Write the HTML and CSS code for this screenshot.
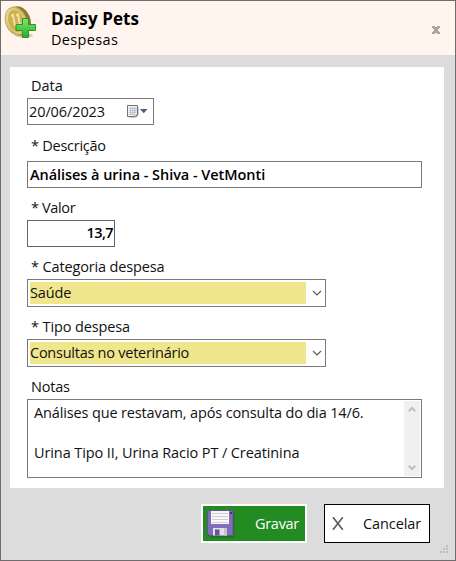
FILE: index.html
```html
<!DOCTYPE html>
<html lang="pt">
<head>
<meta charset="utf-8">
<title>Daisy Pets</title>
<link rel="stylesheet" href="styles.css">
</head>
<body>
<div class="window">
  <header class="header">
    <svg class="logo" width="34" height="34" viewBox="0 0 34 34">
      <defs>
        <linearGradient id="gold" x1="0" y1="0" x2="1" y2="1"><stop offset="0" stop-color="#f6ebae"/><stop offset=".5" stop-color="#cdb050"/><stop offset="1" stop-color="#eedb8d"/></linearGradient>
        <linearGradient id="plus" x1="0" y1="0" x2="0" y2="1"><stop offset="0" stop-color="#7bea68"/><stop offset="1" stop-color="#2da92b"/></linearGradient>
      </defs>
      <ellipse cx="22" cy="30.500" rx="9" ry="2" fill="#b9aa9a" opacity=".6"/>
      <ellipse cx="17.500" cy="16" rx="11" ry="15" transform="rotate(-18 17.500 16)" fill="#8b7636"/>
      <ellipse cx="14" cy="16" rx="10.500" ry="14.500" transform="rotate(-18 14 16)" fill="url(#gold)" stroke="#b49a4b" stroke-width=".7"/>
      <ellipse cx="14" cy="16" rx="8" ry="12" transform="rotate(-18 14 16)" fill="#cbb152" stroke="#ebdc97" stroke-width=".7"/>
      <path d="M9 11l2-1 2 11M14 10.500l2-1 2 11" fill="none" stroke="#f3e39a" stroke-width="2"/>
      <path d="M20.500 13.500h6v6h7v6h-7v7h-6v-7h-6.500v-6h6.500z" fill="url(#plus)" stroke="#2c9829"/>
    </svg>
    <div class="titles">
      <h1 class="title">Daisy Pets</h1>
      <p class="subtitle">Despesas</p>
    </div>
    <svg class="close" width="8" height="8" viewBox="0 0 8 8" shape-rendering="crispEdges"><path d="M0 0h3v1h2v-1h3v2h-1v1h-1v2h1v1h1v2h-3v-1h-2v1h-3v-2h1v-1h1v-2h-1v-1h-1z" fill="#a6a6a3"/></svg>
  </header>
  <main class="panel">
    <label class="label t-data">Data</label>
    <div class="box date"><span class="t-date">20/06/2023</span>
      <svg class="calendar" width="22" height="14" viewBox="0 0 22 14"><path d="M2 2h10v8l-3 3H2z" fill="#d2cece"/><path d="M.5.500h10v8.500l-2.500 2.500H.5z" fill="#f1f2f6" stroke="#77706f"/><path d="M2 3.500h7M2 5.500h7M2 7.500h7M2 9.500h6M3.500 2v8M5.500 2v8M7.500 2v8M9 2v6" stroke="#b4bacb" stroke-width=".7"/><path d="M8 11.500l2.500-2.500v2.500z" fill="#8b8482"/><path d="M13 4h7.500l-3.750 4.200z" fill="#465f8a"/></svg>
    </div>
    <label class="label label-desc t-desc">* Descrição</label>
    <div class="box desc"><span class="t-descv">Análises à urina - Shiva - VetMonti</span></div>
    <label class="label t-valor">* Valor</label>
    <div class="box amount"><span class="t-amount">13,7</span></div>
    <label class="label t-cat">* Categoria despesa</label>
    <div class="box combo"><span class="selected t-saude">Saúde</span><svg class="chevron" width="10" height="6" viewBox="0 0 10 6"><path d="M1 1l4 4 4-4" fill="none" stroke="#555" stroke-width="1.1"/></svg></div>
    <label class="label t-tipo">* Tipo despesa</label>
    <div class="box combo"><span class="selected t-cons">Consultas no veterinário</span><svg class="chevron" width="10" height="6" viewBox="0 0 10 6"><path d="M1 1l4 4 4-4" fill="none" stroke="#555" stroke-width="1.1"/></svg></div>
    <label class="label t-notas">Notas</label>
    <div class="box notes">
      <div class="note-text"><p class="t-note1">Análises que restavam, após consulta do dia 14/6.</p><p class="t-note2">Urina Tipo II, Urina Racio PT / Creatinina</p></div>
      <div class="scrollbar">
        <svg width="8" height="7" viewBox="0 0 8 7"><path d="M.7 5.300L4 2l3.300 3.300" fill="none" stroke="#bfbfbf" stroke-width="2"/></svg>
        <svg width="8" height="7" viewBox="0 0 8 7"><path d="M.7 1.700L4 5l3.300-3.300" fill="none" stroke="#bfbfbf" stroke-width="2"/></svg>
      </div>
    </div>
  </main>
  <footer class="footer">
    <button class="button save">
      <svg width="28" height="28" viewBox="0 0 28 28"><path d="M1.500 2h26v25.500H3.500l-2-2z" fill="#17651a" opacity=".6"/><path d="M.5.500h25.500v25H2.500l-2-2z" fill="#826db8" stroke="#65529b"/><path d="M4 1h18v13H4z" fill="#f8f8f8"/><path d="M5 3.500h16M5 6.500h16M5 9.500h16M5 12.500h16" stroke="#cfcfd2"/><path d="M23 2h2v2h-2z" fill="#43346e"/><path d="M6 18h14v7.500H6z" fill="#e1e1e6"/><path d="M8 19.500h4.500v6H8z" fill="#67539b"/><path d="M17 18h3v7.500h-3z" fill="#c4c4cb"/></svg>
      <span class="t-gravar">Gravar</span>
    </button>
    <button class="button cancel">
      <svg width="12" height="13" viewBox="0 0 12 13"><path d="M1 .3l9.800 12.400M10.800.3L1 12.700" fill="none" stroke="#5c5c5c" stroke-width="1.700"/></svg>
      <span class="t-cancelar">Cancelar</span>
    </button>
    <svg class="grip" width="8" height="8" viewBox="0 0 8 8"><path d="M6 0h2v2H6zM3 3h2v2H3zM6 3h2v2H6zM0 6h2v2H0zM3 6h2v2H3zM6 6h2v2H6z" fill="#bdbdbd"/></svg>
  </footer>
</div>
</body>
</html>
```

FILE: styles.css
```css
* { box-sizing: border-box; }
body { margin: 0; font: 14.5px/20px "Open Sans", "Noto Sans", sans-serif; color: #111; }
h1, p { margin: 0; }
span, p, h1, label { white-space: nowrap; }
.window { width: 456px; height: 561px; border: 1px solid #6e6c6c; background: #dcdcdc; display: flex; flex-direction: column; }
.header { height: 54px; flex: none; background: #fff5ee; display: flex; }
.logo { margin: 4px 0 0 1px; }
.titles { margin: 7px 0 0 15px; flex: 1; }
.title { font-size: 17px; line-height: 22px; font-weight: 700; color: #000; letter-spacing: .1px; }
.subtitle { line-height: 20px; color: #000; letter-spacing: .35px; }
.close { margin: 25px 15px 0 0; }
.panel { margin: 12px 11px 0 9px; height: 421px; flex: none; padding: 9px 22px 0 17px; background: #fff; display: flex; flex-direction: column; align-items: flex-start; }
.label { height: 20px; margin: 10px 0 2px 4px; flex: none; }
.t-data { margin-top: 0; }
.label-desc { margin: 11px 0 5px 4px; }
.box { height: 27px; flex: none; border: 1px solid #7a7a7a; background: #fff; display: flex; align-items: center; }
.date { width: 127px; padding: 0 4px 0 1px; justify-content: space-between; }
.calendar { flex: none; }
.desc { width: 395px; padding-left: 2px; font-weight: 600; color: #000; }
.amount { width: 88px; padding: 0 1px 2px 0; justify-content: flex-end; font-weight: 600; border-color: #646464; color: #000; }
.combo { width: 299px; height: 28px; padding-left: 2px; justify-content: space-between; }
.selected { width: 276px; height: 22px; line-height: 22px; background: #f0e68c; }
.chevron { margin-right: 3px; }
.notes { width: 395px; height: 79px; align-items: stretch; justify-content: space-between; }
.note-text { padding: 3px 0 0 6px; }
.note-text p + p { margin-top: 20px; }
.scrollbar { width: 16px; margin: 1px; background: #f0f0f0; display: flex; flex-direction: column; align-items: center; justify-content: space-between; padding: 5px 0; }
.footer { flex: 1; display: flex; align-items: flex-start; justify-content: flex-end; padding-top: 16px; }
.button { width: 106px; height: 39px; padding: 0; font: inherit; display: flex; align-items: center; }
.save { background: #228b22; border: 2px solid #fff; color: #fff; margin-right: 17px; }
.save svg { margin: 0 20px 0 4px; }
.cancel { background: #fff; border: 1px solid #000; color: #111; }
.cancel svg { margin: 0 19px 0 7px; }
.grip { margin: 41px 7px 0 10px; }

/* Tracking per text run */
.t-date { letter-spacing: -.1px; }
.t-desc { letter-spacing: -.25px; }
.t-descv { letter-spacing: -.05px; }
.t-valor { letter-spacing: -.35px; }
.t-amount { letter-spacing: -.6px; }
.t-cat { letter-spacing: -.14px; }
.t-tipo { letter-spacing: -.12px; }
.t-saude { letter-spacing: -.1px; }
.t-cons { letter-spacing: -.25px; }
.t-notas { letter-spacing: -.2px; }
.t-note1 { letter-spacing: -.14px; }
.t-note2 { letter-spacing: -.1px; }
.t-gravar { letter-spacing: -.3px; }
.t-cancelar { letter-spacing: -.1px; }
```
